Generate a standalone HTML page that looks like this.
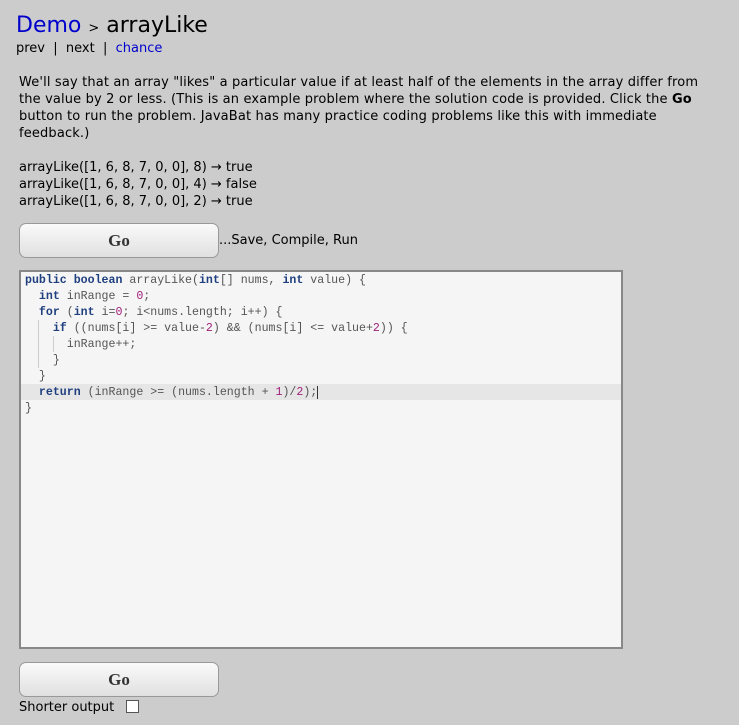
<!DOCTYPE html>
<html><head><style>
body{margin:0;background:#cccccc;font-family:"DejaVu Sans","Liberation Sans",sans-serif;font-size:13px;color:#000;}
.a{position:absolute;white-space:nowrap;}
.btn{position:absolute;left:19px;width:198px;height:33px;border:1px solid #999;border-radius:7px;background:linear-gradient(#fafafa,#e0e0e0);font-family:"Liberation Serif",serif;font-weight:bold;font-size:17px;color:#333;text-align:center;line-height:33px;}
.ed{position:absolute;left:19px;top:270px;width:600px;height:375px;border:2px solid #888;background:#f5f5f5;}
.code{font-family:"Liberation Mono",monospace;font-size:11.6px;color:#555;}
.ln{position:absolute;left:0;height:16px;line-height:16px;white-space:pre;}
.k{color:#1f3f7f;font-weight:bold}.n{color:#a0207a}
.g{position:absolute;width:1px;background:#ccc;}
</style></head><body>
<div class="a" style="left:16px;top:13px;font-size:22px;"><span style="color:#0000cc">Demo</span> <span style="font-size:13px">&gt;</span> arrayLike</div>
<div class="a" style="left:16px;top:41px;">prev &nbsp;| &nbsp;next &nbsp;| &nbsp;<span style="color:#0000cc">chance</span></div>
<div class="a" style="left:19px;top:74px;line-height:17px;white-space:normal;width:682px;letter-spacing:0.15px;">We'll say that an array "likes" a particular value if at least half of the elements in the array differ from the value by 2 or less. (This is an example problem where the solution code is provided. Click the <b>Go</b> button to run the problem. JavaBat has many practice coding problems like this with immediate feedback.)</div>
<div class="a" style="left:19px;top:159px;line-height:17px;">arrayLike([1, 6, 8, 7, 0, 0], 8) → true<br>arrayLike([1, 6, 8, 7, 0, 0], 4) → false<br>arrayLike([1, 6, 8, 7, 0, 0], 2) → true</div>
<div class="btn" style="top:223px;">Go</div>
<div class="a" style="left:219px;top:233px;">...Save, Compile, Run</div>
<div class="ed code">
<div style="position:absolute;left:0;top:112px;width:600px;height:16px;background:#e6e6e6"></div>
<div class="g" style="left:17px;top:48px;height:48px"></div>
<div class="g" style="left:32px;top:64px;height:16px"></div>
<div class="ln" style="top:1px;left:4px"><span class="k">public</span> <span class="k">boolean</span> arrayLike(<span class="k">int</span>[] nums, <span class="k">int</span> value) {</div>
<div class="ln" style="top:17px;left:4px">  <span class="k">int</span> inRange = <span class="n">0</span>;</div>
<div class="ln" style="top:33px;left:4px">  <span class="k">for</span> (<span class="k">int</span> i=<span class="n">0</span>; i&lt;nums.length; i++) {</div>
<div class="ln" style="top:49px;left:4px">    <span class="k">if</span> ((nums[i] &gt;= value-<span class="n">2</span>) &amp;&amp; (nums[i] &lt;= value+<span class="n">2</span>)) {</div>
<div class="ln" style="top:65px;left:4px">      inRange++;</div>
<div class="ln" style="top:81px;left:4px">    }</div>
<div class="ln" style="top:97px;left:4px">  }</div>
<div class="ln" style="top:113px;left:4px">  <span class="k">return</span> (inRange &gt;= (nums.length + <span class="n">1</span>)/<span class="n">2</span>);<span style="border-left:1px solid #333"></span></div>
<div class="ln" style="top:129px;left:4px">}</div>
</div>
<div class="btn" style="top:662px;">Go</div>
<div class="a" style="left:19px;top:700px;">Shorter output</div>
<div class="a" style="left:126px;top:700px;width:11px;height:11px;border:1px solid #555;background:#fff"></div>
</body></html>
